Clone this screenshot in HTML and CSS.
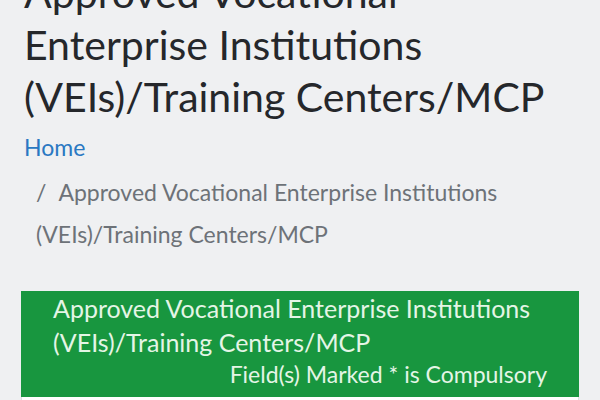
FILE: index.html
```html
<!DOCTYPE html>
<html lang="en">
<head>
<meta charset="utf-8">
<title>Approved VEIs</title>
<link rel="stylesheet" href="styles.css">
</head>
<body>
<main class="page">
  <h1 class="title">Approved Vocational Enterprise Institutions (VEIs)/Training Centers/MCP</h1>
  <ol class="crumbs">
    <li class="crumb"><a href="#" class="crumb-link">Home</a></li>
    <li class="crumb crumb-current">Approved Vocational Enterprise Institutions (VEIs)/Training Centers/MCP</li>
  </ol>
  <section class="card">
    <header class="card-head">
      <div class="card-title">Approved Vocational Enterprise Institutions (VEIs)/Training Centers/MCP</div>
      <div class="card-note">Field(s) Marked * is Compulsory</div>
    </header>
    <div class="card-body"></div>
  </section>
</main>
</body>
</html>
```

FILE: styles.css
```css
html, body {
  margin: 0;
  padding: 0;
  background: #eff0f2;
}
body {
  font-family: Lato, "Noto Sans", sans-serif;
  color: #222428;
  overflow: hidden;
}
.page {
  padding: 0 21px 0 21px;
}
.title {
  margin: -33px 0 0 0;
  padding-left: 3px;
  font-size: 41px;
  line-height: 52px;
  font-weight: 400;
  color: #25272b;
}
.crumbs {
  list-style: none;
  margin: 3px 0 0 0;
  padding: 0 0 0 3px;
  display: flex;
  flex-wrap: wrap;
  row-gap: 3px;
  font-size: 23px;
  line-height: 42px;
}
.crumb-link {
  color: #2a78c2;
  text-decoration: none;
}
.crumb + .crumb {
  padding-left: 12px;
}
.crumb + .crumb::before {
  content: "/";
  float: left;
  padding-right: 12px;
  color: #6d7278;
}
.crumb-current {
  color: #6d7278;
}
.card {
  margin-top: 36px;
  background: #ffffff;
}
.card-head {
  background: #18963f;
  color: #e4f5e6;
  padding: 0 32px 8px 32px;
}
.card-title {
  font-size: 25px;
  line-height: 34px;
}
.card-note {
  text-align: right;
  font-size: 23px;
  line-height: 30px;
}
.card-body {
  height: 40px;
  border: 1px solid #dfe2e5;
  border-top: none;
}
```
